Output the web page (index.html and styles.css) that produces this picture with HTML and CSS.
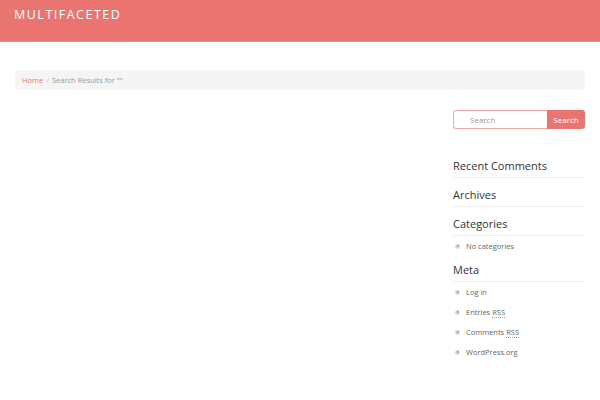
FILE: index.html
```html
<!DOCTYPE html>
<html>
<head>
<meta charset="utf-8">
<link rel="stylesheet" href="styles.css">
</head>
<body>
<header class="site-header">
  <div class="site-title">MULTIFACETED</div>
</header>
<div class="container">
  <div class="breadcrumb">
    <a class="crumb-link" href="#">Home</a><span class="sep">/</span><span class="crumb-current">Search Results for ""</span>
  </div>
  <div class="content-row">
    <main class="main"></main>
    <aside class="sidebar">
      <form class="search-form">
        <input class="search-input" type="text" placeholder="Search">
        <button class="search-btn" type="button">Search</button>
      </form>
      <section class="widget">
        <h3 class="widget-title">Recent Comments</h3>
      </section>
      <section class="widget">
        <h3 class="widget-title">Archives</h3>
      </section>
      <section class="widget">
        <h3 class="widget-title">Categories</h3>
        <ul class="widget-list">
          <li>No categories</li>
        </ul>
      </section>
      <section class="widget">
        <h3 class="widget-title">Meta</h3>
        <ul class="widget-list">
          <li><a href="#">Log in</a></li>
          <li><a href="#">Entries <abbr>RSS</abbr></a></li>
          <li><a href="#">Comments <abbr>RSS</abbr></a></li>
          <li><a href="#">WordPress.org</a></li>
        </ul>
      </section>
    </aside>
  </div>
</div>
</body>
</html>
```
FILE: styles.css
```css
* { box-sizing: border-box; }
body {
  margin: 0;
  background: #fff;
  font-family: "Open Sans", "DejaVu Sans", sans-serif;
  color: #555;
}
.site-header {
  height: 42px;
  background: #ea7570;
  border-bottom: 1px solid #ef8f8a;
  padding: 7px 14px 0;
}
.site-title {
  color: #fff;
  font-size: 12.5px;
  letter-spacing: 1.5px;
  line-height: 16px;
}
.container {
  padding: 28px 15px 0;
}
.breadcrumb {
  height: 20px;
  background: #f5f5f5;
  border-radius: 3px;
  padding: 0 7px;
  display: flex;
  align-items: center;
  font-size: 7.5px;
  color: #999;
}
.crumb-link { color: #ea7570; text-decoration: none; }
.sep { color: #ccc; padding: 0 3px; }
.content-row {
  display: flex;
  justify-content: space-between;
  padding-top: 20px;
}
.main { flex: 1; }
.sidebar { width: 132px; }
.search-form {
  display: flex;
  height: 19px;
  margin-bottom: 29px;
}
.search-input {
  width: 94px;
  border: 1px solid #f0a9a6;
  border-right: none;
  border-radius: 3px 0 0 3px;
  padding: 0 0 0 16px;
  font-family: inherit;
  font-size: 8px;
  color: #999;
  outline: none;
}
.search-input::placeholder { color: #999; }
.search-btn {
  flex: 1;
  border: none;
  background: #ea7570;
  color: #fff;
  font-family: inherit;
  font-size: 8px;
  border-radius: 0 3px 3px 0;
  padding: 0;
}
.widget { margin-bottom: 9px; }
.widget-title {
  margin: 0;
  font-size: 11px;
  font-weight: 400;
  color: #333;
  line-height: 16px;
  padding-bottom: 3px;
  border-bottom: 1px solid #eee;
}
.widget-list {
  list-style: none;
  margin: 0 0 -3px;
  padding: 0;
}
.widget-list li {
  position: relative;
  font-size: 7.5px;
  line-height: 18px;
  padding: 1px 0 1px 13px;
  color: #666;
}
.widget-list li::before {
  content: "";
  position: absolute;
  left: 2px;
  top: 7.5px;
  width: 5px;
  height: 5px;
  border-radius: 50%;
  background: #ddd;
}
.widget-list li::after {
  content: "";
  position: absolute;
  left: 4px;
  top: 8.5px;
  border-left: 2px solid #777;
  border-top: 1.5px solid transparent;
  border-bottom: 1.5px solid transparent;
}
.widget-list a { color: #666; text-decoration: none; }
abbr { text-decoration: none; border-bottom: 1px dotted #999; }
```
